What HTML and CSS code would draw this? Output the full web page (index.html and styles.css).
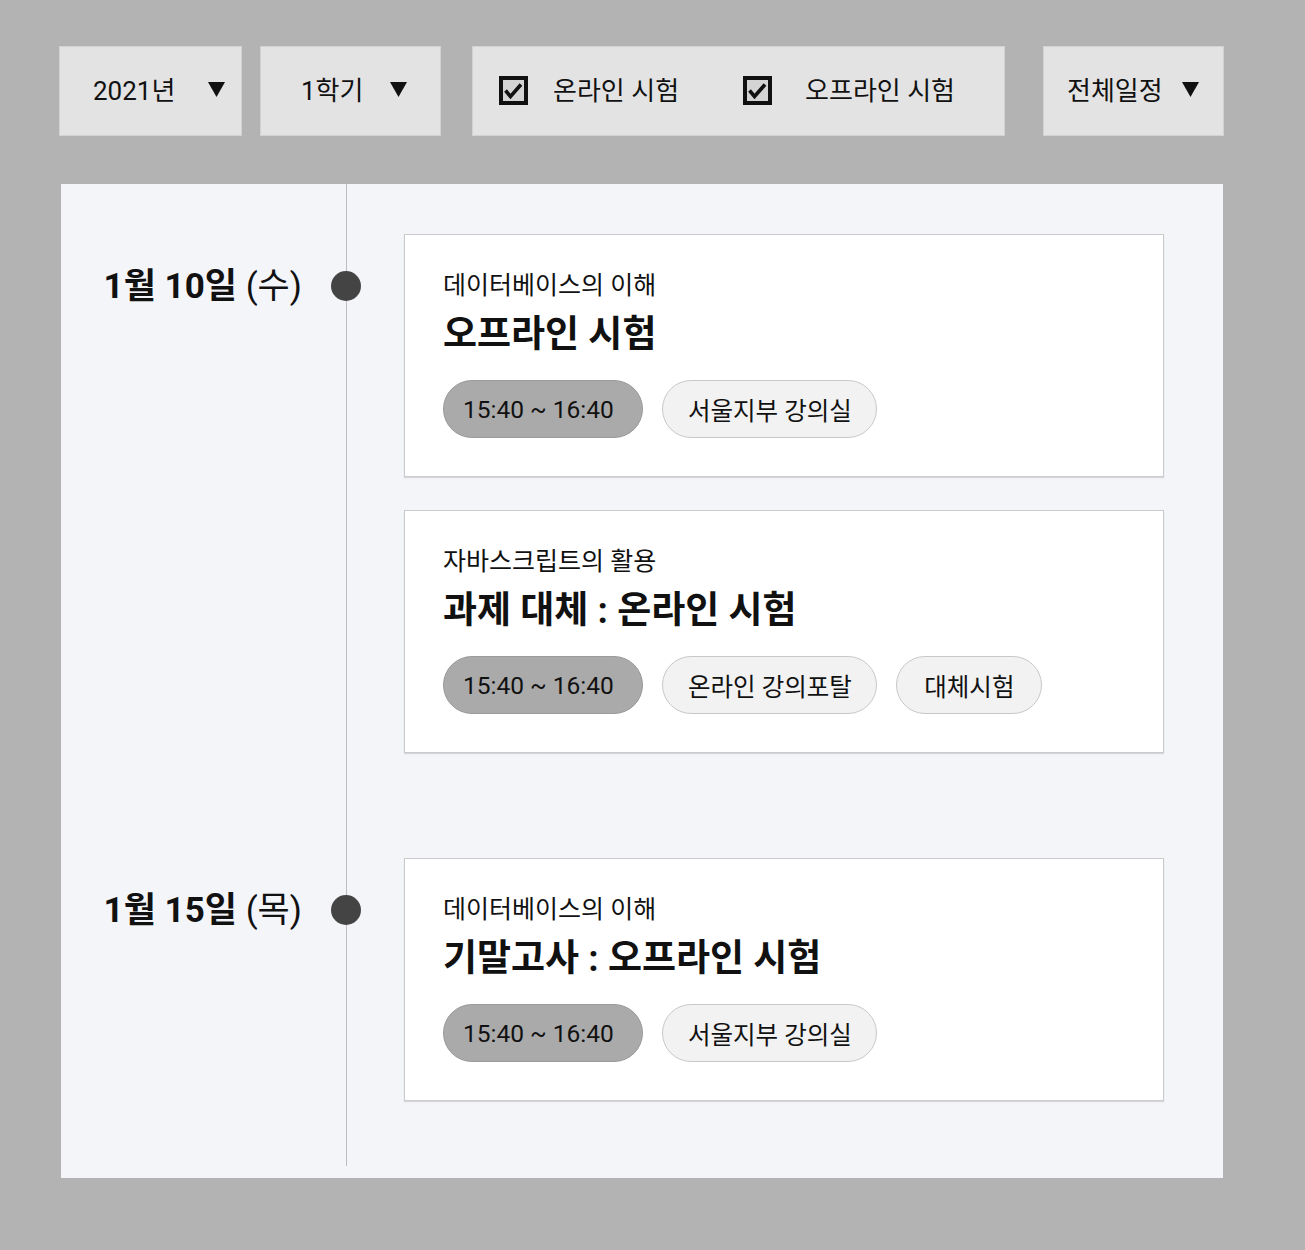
FILE: index.html
```html
<!DOCTYPE html>
<html lang="ko">
<head>
    <meta charset="UTF-8" />
    <title>시험 일정</title>
    <link rel="stylesheet" href="styles.css">
</head>
<body>
    <div class="filters">
        <div class="filter select year">
            <span>2021년</span>
            <svg class="caret" width="17" height="15" viewBox="0 0 17 15"><polygon points="0,0 17,0 8.5,15" fill="#111"/></svg>
        </div>
        <div class="filter select term">
            <span>1학기</span>
            <svg class="caret" width="17" height="15" viewBox="0 0 17 15"><polygon points="0,0 17,0 8.5,15" fill="#111"/></svg>
        </div>
        <div class="filter checks">
            <label class="check">
                <svg class="box" width="29" height="29" viewBox="0 0 29 29">
                    <rect x="2" y="2" width="25" height="25" fill="#d4d4d4" stroke="#111" stroke-width="4"/>
                    <path d="M6.5 14.5 L11.5 20.5 L22 8.5" fill="none" stroke="#111" stroke-width="3.6"/>
                </svg>
                <span>온라인 시험</span>
            </label>
            <label class="check">
                <svg class="box" width="29" height="29" viewBox="0 0 29 29">
                    <rect x="2" y="2" width="25" height="25" fill="#d4d4d4" stroke="#111" stroke-width="4"/>
                    <path d="M6.5 14.5 L11.5 20.5 L22 8.5" fill="none" stroke="#111" stroke-width="3.6"/>
                </svg>
                <span>오프라인 시험</span>
            </label>
        </div>
        <div class="filter select all">
            <span>전체일정</span>
            <svg class="caret" width="17" height="15" viewBox="0 0 17 15"><polygon points="0,0 17,0 8.5,15" fill="#111"/></svg>
        </div>
    </div>

    <div class="timeline">
        <div class="day">
            <div class="date"><b>1월 10일</b> (수)</div>
            <div class="dot"></div>
            <div class="cards">
                <div class="card">
                    <div class="course">데이터베이스의 이해</div>
                    <div class="title">오프라인 시험</div>
                    <div class="chips">
                        <span class="chip time">15:40 ~ 16:40</span>
                        <span class="chip">서울지부 강의실</span>
                    </div>
                </div>
                <div class="card">
                    <div class="course">자바스크립트의 활용</div>
                    <div class="title">과제 대체 : 온라인 시험</div>
                    <div class="chips">
                        <span class="chip time">15:40 ~ 16:40</span>
                        <span class="chip">온라인 강의포탈</span>
                        <span class="chip">대체시험</span>
                    </div>
                </div>
            </div>
        </div>
        <div class="day">
            <div class="date"><b>1월 15일</b> (목)</div>
            <div class="dot"></div>
            <div class="cards">
                <div class="card">
                    <div class="course">데이터베이스의 이해</div>
                    <div class="title">기말고사 : 오프라인 시험</div>
                    <div class="chips">
                        <span class="chip time">15:40 ~ 16:40</span>
                        <span class="chip">서울지부 강의실</span>
                    </div>
                </div>
            </div>
        </div>
    </div>
</body>
</html>
```

FILE: styles.css
```css
:root {
    --page-bg: #b3b3b3;
    --filter-bg: #e3e3e3;
    --panel-bg: #f4f5f9;
    --line: #bdbdbd;
    --text: #111;
    --font: Roboto, "Noto Sans CJK KR", sans-serif;
}

html, body {
    margin: 0;
    padding: 0;
    background: var(--page-bg);
    font-family: var(--font);
    color: var(--text);
}

body {
    padding: 46px 0 72px 59px;
}

/* filter bar */
.filters {
    display: flex;
    height: 90px;
}

.filter {
    display: flex;
    align-items: center;
    box-sizing: border-box;
    height: 90px;
    padding-bottom: 5px;
    background: var(--filter-bg);
    border: 1px solid #d2d2d2;
    font-size: 26px;
}

.year {
    width: 183px;
    gap: 33px;
    padding-left: 33px;
}

.term {
    width: 181px;
    margin-left: 18px;
    gap: 27px;
    padding-left: 40px;
}

.checks {
    width: 533px;
    margin-left: 31px;
    padding-left: 26px;
    gap: 64px;
}

.check {
    display: flex;
    align-items: center;
    gap: 25px;
}

.check:last-child {
    gap: 33px;
}

.box {
    display: block;
    margin-top: 3px;
}

.all {
    width: 181px;
    margin-left: 38px;
    gap: 19px;
    padding-left: 23px;
}

.caret {
    display: block;
    margin-top: 2px;
}

/* timeline */
.timeline {
    width: 1162px;
    height: 994px;
    box-sizing: border-box;
    margin: 48px 0 0 2px;
    padding-top: 50px;
    background: linear-gradient(var(--line), var(--line)) no-repeat 285px 0 / 1px calc(100% - 12px), var(--panel-bg);
}

.day {
    display: grid;
    grid-template-columns: 241px 30px 774px;
    column-gap: 29px;
    align-items: start;
    margin-bottom: 105px;
}

.date {
    text-align: right;
    font-size: 35px;
    line-height: 44px;
    padding-top: 31px;
    white-space: nowrap;
}

.date b {
    font-weight: 700;
}

.dot {
    width: 30px;
    height: 30px;
    margin-top: 37px;
    border-radius: 50%;
    background: #444;
}

.cards {
    display: flex;
    flex-direction: column;
    gap: 33px;
    margin-left: 14px;
}

.card {
    background: #fff;
    border: 1px solid #cbcbcb;
    box-shadow: 0 1px 1px rgba(0, 0, 0, 0.12);
    padding: 36px 38px 38px;
}

.course {
    font-size: 25px;
    line-height: 30px;
}

.title {
    margin-top: 11px;
    font-size: 37px;
    line-height: 46px;
    font-weight: 700;
}

.chips {
    display: flex;
    gap: 19px;
    margin-top: 22px;
}

.chip {
    display: flex;
    align-items: center;
    justify-content: center;
    box-sizing: border-box;
    min-width: 146px;
    height: 58px;
    padding: 0 24px 0 25px;
    border-radius: 29px;
    border: 1px solid #c8c8c8;
    background: #f2f2f2;
    font-size: 24.5px;
}

.chip.time {
    width: 200px;
    padding: 0 19px;
    justify-content: flex-start;
    background: #aaaaaa;
    border-color: #9a9a9a;
}
```
